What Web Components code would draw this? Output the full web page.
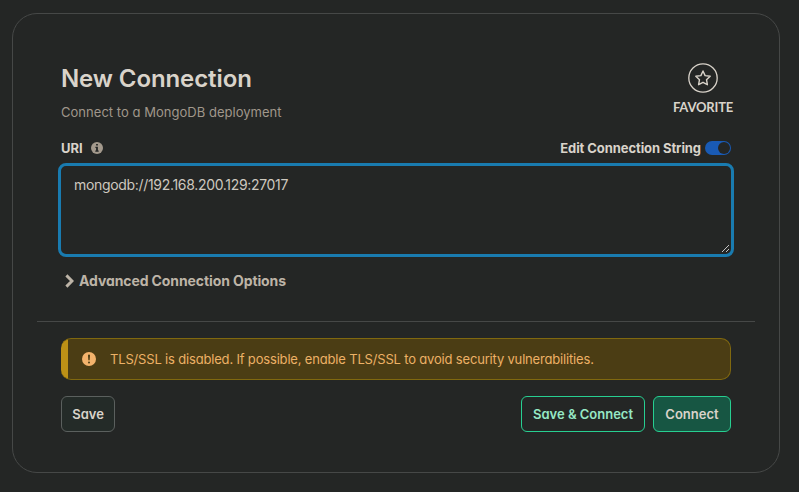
<!DOCTYPE html>
<html lang="en">
<head>
<meta charset="utf-8">
<title>New Connection</title>
<style>
html,body{margin:0;height:100%;background:#242625}
body{font-family:Inter,"Liberation Sans",sans-serif;font-feature-settings:"cv11";color:#d9d3ca;overflow:hidden}
</style>
</head>
<body>
<connection-card></connection-card>
<script>
const define = (name, html) => customElements.define(name, class extends HTMLElement {
  constructor() {
    super();
    const t = document.createElement('template');
    t.innerHTML = html;
    this.attachShadow({mode: 'open'}).append(t.content.cloneNode(true));
  }
});

define('favorite-button', `
<style>
:host{display:flex;flex-direction:column;align-items:center;width:60px;margin-right:-2px}
svg{display:block}
span{font:700 13px/16px Lato,"Noto Sans",sans-serif;margin-top:6px;white-space:nowrap;letter-spacing:-.18px}
</style>
<svg width="30" height="30" viewBox="0 0 30 30" fill="none" stroke="#d9d3ca">
<circle cx="15" cy="15" r="14.2" stroke-width="1.3"/>
<path d="M15 8 L17.1 12.6 L22.2 13.2 L18.5 16.7 L19.4 21.7 L15 19.3 L10.6 21.7 L11.5 16.7 L7.8 13.2 L12.9 12.6 Z" stroke-width="1.4" stroke-linejoin="round"/>
</svg>
<span><slot></slot></span>`);

define('form-heading', `
<style>
:host{display:block}
h1{margin:0;font-size:24px;line-height:32px;font-weight:600;letter-spacing:var(--title-spacing,0)}
p{margin:7px 0 0;font-size:13px;line-height:20px;color:#a0978b;letter-spacing:var(--sub-spacing,0)}
h1,p{white-space:nowrap}
</style>
<h1><slot name="title"></slot></h1><p><slot></slot></p>`);

define('info-icon', `
<style>:host{display:block;width:12px;height:12px}svg{display:block}</style>
<svg width="12" height="12" viewBox="0 0 12 12"><circle cx="6" cy="6" r="6" fill="#a3998c"/><path d="M5.1 2h1.8v1.6H5.1zM4.4 4.7h2.5v3.8h.8v1.2H4.3V8.5h.8V5.9h-.7z" fill="#242625"/></svg>`);

define('toggle-switch', `
<style>
:host{display:flex;justify-content:flex-end;box-sizing:border-box;width:26px;height:14px;padding:1px;border-radius:7px;background:#195ab4}
i{width:12px;height:12px;border-radius:50%;background:#242625}
</style><i></i>`);

define('uri-field', `
<style>
:host{display:flex;justify-content:space-between;box-sizing:border-box;height:94px;margin:0 -3px;border:3px solid #197bb0;border-radius:8px;padding:9px 1px 0 13px}
span{font-size:14px;line-height:20px;white-space:nowrap;letter-spacing:var(--uri-spacing,0);color:#cec8bf}
svg{align-self:flex-end;display:block;margin-bottom:1px}
</style>
<span><slot></slot></span>
<svg width="9" height="9" viewBox="0 0 9 9" stroke="#c4c4c4" fill="none"><path d="M1 8 L8 1 M5 8 L8 5"/></svg>`);

define('options-accordion', `
<style>
:host{display:flex;align-items:center;height:20px;padding-left:4px;color:#bdb4a7}
svg{display:block;margin-right:5px}
span{font-size:14px;line-height:20px;font-weight:700;white-space:nowrap;letter-spacing:var(--adv-spacing,0)}
</style>
<svg width="9" height="14" viewBox="0 0 9 14" fill="none" stroke="currentColor" stroke-width="2.9"><path d="M1.4 1.4 L7 7 L1.4 12.6"/></svg>
<span><slot></slot></span>`);

define('warning-banner', `
<style>
:host{display:flex;align-items:center;box-sizing:border-box;height:42px;border:1px solid #80680f;border-left:0;border-radius:10px;overflow:hidden;background:linear-gradient(90deg,#bd9116 7px,#4b3d14 7px);padding-left:21px;color:#edb166}
svg{display:block;margin-right:14px}
span{font-size:13px;line-height:20px;white-space:nowrap;letter-spacing:var(--warn-spacing,0)}
</style>
<svg width="14" height="14" viewBox="0 0 14 14"><circle cx="7" cy="7" r="7" fill="#f3b36c"/><path d="M6 3.4a1 1 0 0 1 2 0L7.7 7.8a.7.7 0 0 1-1.4 0z" fill="#4b3d14"/><circle cx="7" cy="10.5" r="1" fill="#4b3d14"/></svg>
<span><slot></slot></span>`);

define('action-button', `
<style>
:host{display:flex;align-items:center;justify-content:center;box-sizing:border-box;height:36px;border:1px solid #5b605e;border-radius:6px;background:#242b28;width:54px;font-size:13px;font-weight:600;white-space:nowrap}
:host([kind=outline]){border-color:#27cf91;background:transparent;color:#96e8c5;width:124px}
:host([kind=primary]){border-color:#27cf91;background:#175643;width:78px}
</style><span><slot></slot></span>`);

define('connection-card', `
<style>
:host{display:block;box-sizing:border-box;width:768px;height:460px;margin:13px 0 0 12px;border:1px solid #464847;border-radius:25px;padding:49px 48px 0;
--title-spacing:-.1px;--sub-spacing:.03px;--uri-spacing:-.32px;--adv-spacing:-.1px;--warn-spacing:-.175px}
header,.row,.actions{display:flex;justify-content:space-between}
header{height:75px}
.row{height:20px;align-items:center}
.group{display:flex;align-items:center;font-size:13px;font-weight:700;white-space:nowrap}
.uri{gap:8px}.edit{gap:4px}
.edit span{letter-spacing:-.08px}
uri-field{margin-top:5px}
options-accordion{margin-top:14px}
hr{height:1px;border:0;margin:30px -24px 16px;background:#464847}
.actions{margin-top:16px}
.right{display:flex;gap:8px}
form-heading,favorite-button{flex:none}
</style>
<header>
<form-heading><span slot="title">New Connection</span>Connect to a MongoDB deployment</form-heading>
<favorite-button>FAVORITE</favorite-button>
</header>
<div class="row"><div class="group uri"><span>URI</span><info-icon></info-icon></div><div class="group edit"><span>Edit Connection String</span><toggle-switch></toggle-switch></div></div>
<uri-field>mongodb://192.168.200.129:27017</uri-field>
<options-accordion>Advanced Connection Options</options-accordion>
<hr>
<warning-banner>TLS/SSL is disabled. If possible, enable TLS/SSL to avoid security vulnerabilities.</warning-banner>
<div class="actions"><action-button>Save</action-button><div class="right"><action-button kind="outline">Save &amp; Connect</action-button><action-button kind="primary">Connect</action-button></div></div>`);
</script>
</body>
</html>
